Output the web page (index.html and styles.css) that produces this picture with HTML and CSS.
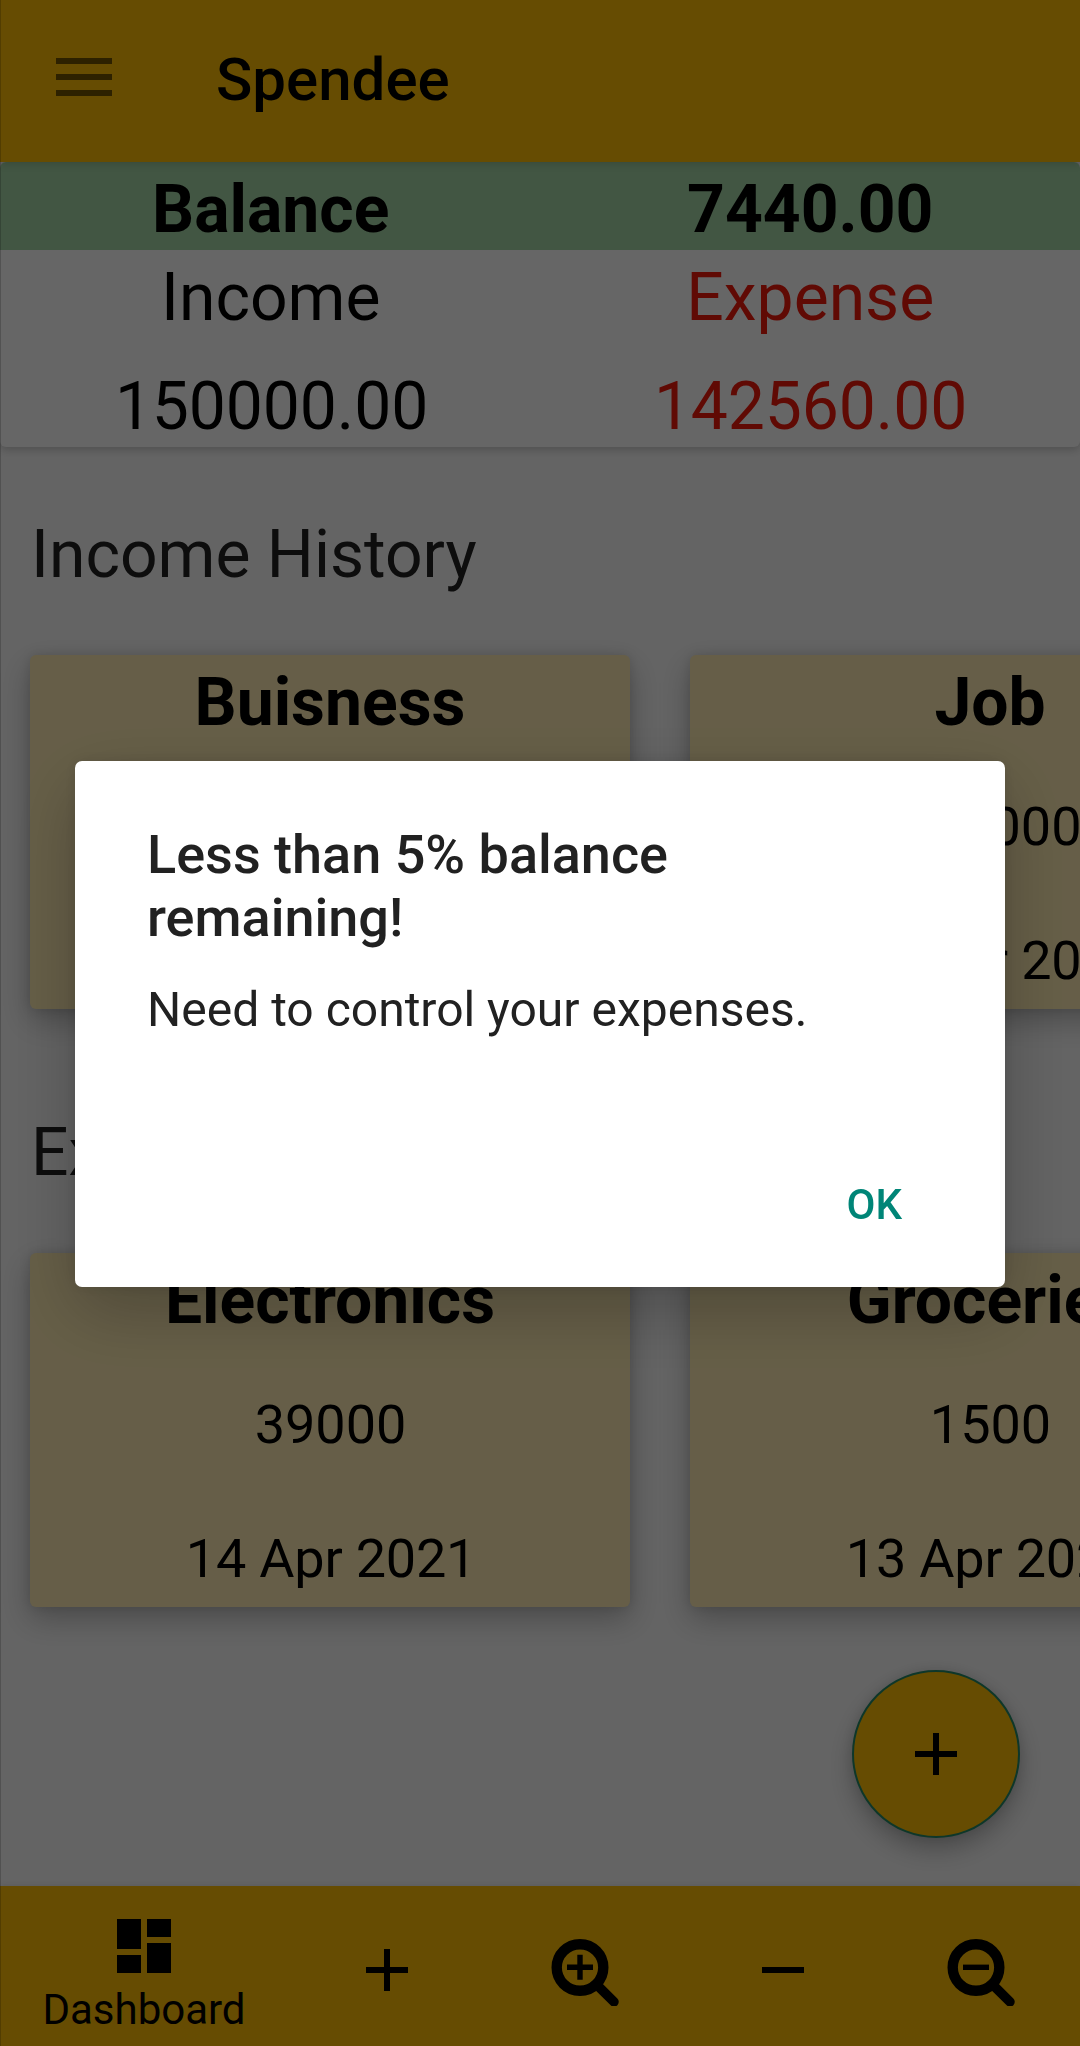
FILE: index.html
```html
<!DOCTYPE html>
<html lang="en">
<head>
<meta charset="utf-8">
<title>Spendee</title>
<link rel="stylesheet" href="styles.css">
</head>
<body>
<div class="app">
  <header class="appbar">
    <svg class="menu-icon" viewBox="0 0 56 38" width="56" height="38"><path d="M0 0h56v6H0zM0 16h56v6H0zM0 32h56v6H0z"/></svg>
    <h1 class="appbar-title">Spendee</h1>
  </header>
  <main class="content">
    <section class="summary">
      <div class="row balance"><span>Balance</span><span>7440.00</span></div>
      <div class="row labels"><span>Income</span><span class="expense">Expense</span></div>
      <div class="row totals"><span>150000.00</span><span class="expense">142560.00</span></div>
    </section>
    <section class="history">
      <h2>Income History</h2>
      <div class="cards">
        <article class="card"><h3>Buisness</h3><p class="amount">50000</p><p class="date">14 Apr 2021</p></article>
        <article class="card"><h3>Job</h3><p class="amount">100000</p><p class="date">13 Mar 2021</p></article>
      </div>
    </section>
    <section class="history second">
      <h2>Expense History</h2>
      <div class="cards">
        <article class="card"><h3>Electronics</h3><p class="amount">39000</p><p class="date">14 Apr 2021</p></article>
        <article class="card"><h3>Groceries</h3><p class="amount">1500</p><p class="date">13 Apr 2021</p></article>
      </div>
    </section>
    <button class="fab" aria-label="Add"><svg viewBox="0 0 42 42" width="42" height="42"><path d="M18 0h6v18h18v6H24v18h-6V24H0v-6h18z"/></svg></button>
  </main>
  <nav class="bottom-nav">
    <a class="nav-item active">
      <svg viewBox="0 0 54 54" width="54" height="54"><path d="M0 0h24v30H0zM30 0h24v18H30zM30 24h24v30H30zM0 36h24v18H0z"/></svg>
      <span>Dashboard</span>
    </a>
    <a class="nav-item"><svg viewBox="0 0 72 72" width="72" height="72"><path d="M33 15h6v18h18v6H39v18h-6V39H15v-6h18z"/></svg></a>
    <a class="nav-item"><svg viewBox="0 0 72 72" width="72" height="72"><circle class="ring" cx="31" cy="33.5" r="23.3"/><path class="handle" d="M47.5 50.5L65 67.8"/><path class="sign" d="M18 33.3h26M31 20.8v25"/></svg></a>
    <a class="nav-item"><svg viewBox="0 0 72 72" width="72" height="72"><path d="M15 33h42v6H15z"/></svg></a>
    <a class="nav-item"><svg viewBox="0 0 72 72" width="72" height="72"><circle class="ring" cx="31" cy="33.5" r="23.3"/><path class="handle" d="M47.5 50.5L65 67.8"/><path class="sign" d="M18 33.3h26"/></svg></a>
  </nav>
</div>
<div class="scrim">
  <div class="dialog" role="alertdialog">
    <h2 class="dialog-title">Less than 5% balance remaining!</h2>
    <p class="dialog-text">Need to control your expenses.</p>
    <button class="dialog-ok">OK</button>
  </div>
</div>
</body>
</html>
```
FILE: styles.css
```css
* { box-sizing: border-box; margin: 0; padding: 0; }
body { width: 1080px; height: 2046px; overflow: hidden; font-family: Roboto, sans-serif; color: #000; }
button { border: 0; background: none; font-family: inherit; }
svg { display: block; }
h1, h2, h3 { font-weight: 400; }

.app { display: flex; flex-direction: column; width: 1080px; height: 2046px; background: #fafafa; }

.appbar { display: flex; align-items: center; height: 162px; padding: 0 56px; gap: 104px; background: #ffbd05; position: relative; z-index: 1; box-shadow: 0 2px 8px rgba(0,0,0,.15); }
.menu-icon { fill: #725402; margin-top: -8px; }
.appbar-title { font-size: 60px; font-weight: 500; line-height: 80px; margin-top: -2px; }

.content { flex: 1; position: relative; overflow: hidden; }
.summary { background: #fff; border-radius: 6px; overflow: hidden; box-shadow: 0 3px 9px rgba(0,0,0,.2); }
.row { display: grid; grid-template-columns: 1fr 1fr; height: 88px; padding-left: 1px; text-align: center; font-size: 66px; line-height: 96px; }
.balance { background: #a5d6a7; font-weight: 700; }
.labels { margin-bottom: 21px; }
.totals { padding-left: 2px; letter-spacing: -.1px; }
.expense { color: #f01a0c; }

.history { padding: 60px 0 0 30px; }
.history.second { padding-top: 96px; }
.history h2 { height: 88px; padding-left: 1px; font-size: 66px; line-height: 96px; color: #212121; margin-bottom: 60px; }
.cards { display: flex; gap: 60px; }
.card { flex: 0 0 600px; height: 354px; border-radius: 6px; background: #ffecb3; text-align: center; box-shadow: 0 12px 30px rgba(0,0,0,.25), 0 0 12px rgba(0,0,0,.12); }
.card h3 { height: 88px; font-size: 66px; line-height: 96px; font-weight: 700; }
.card p { height: 72px; padding-left: 1px; font-size: 54px; line-height: 78px; }
.card .amount { margin-top: 45px; }
.card .date { margin-top: 62px; padding-left: 2px; letter-spacing: -.2px; }

.fab { position: absolute; right: 60px; bottom: 48px; width: 168px; height: 168px; border-radius: 50%; display: flex; align-items: center; justify-content: center; background: #ffbd05; border: 2px solid #248a68; box-shadow: 0 12px 24px rgba(0,0,0,.25), 0 0 12px rgba(0,0,0,.1); }

.bottom-nav { display: grid; grid-template-columns: 288px repeat(4, 198px); height: 160px; background: #ffbd05; position: relative; box-shadow: 0 0 6px rgba(0,0,0,.12); }
.nav-item { display: flex; flex-direction: column; align-items: center; padding-top: 48px; }
.nav-item.active { padding-top: 33px; }
.nav-item span { font-size: 42px; line-height: 56px; margin-top: 9px; }
.ring { fill: none; stroke: #000; stroke-width: 10.4; }
.handle { fill: none; stroke: #000; stroke-width: 9.5; stroke-linecap: round; }
.sign { fill: none; stroke: #000; stroke-width: 5.4; }

.scrim { position: fixed; inset: 0; z-index: 5; display: flex; justify-content: center; align-items: flex-start; padding-top: 761px; background: rgba(0,0,0,.6); box-shadow: inset 1px 0 rgba(0,0,0,.2); }
.dialog { width: 930px; height: 526px; border-radius: 7px; background: #fff; padding: 62px 72px 0; display: flex; flex-direction: column; color: #212121; box-shadow: 0 24px 70px rgba(0,0,0,.24), 0 0 16px rgba(0,0,0,.1); }
.dialog-title { width: 620px; font-size: 54px; font-weight: 500; line-height: 63px; }
.dialog-text { font-size: 48px; line-height: 56px; margin-top: 33px; }
.dialog-ok { align-self: flex-end; margin: 139px 31px 0 0; font-size: 42px; line-height: 56px; font-weight: 500; color: #008577; }
```
